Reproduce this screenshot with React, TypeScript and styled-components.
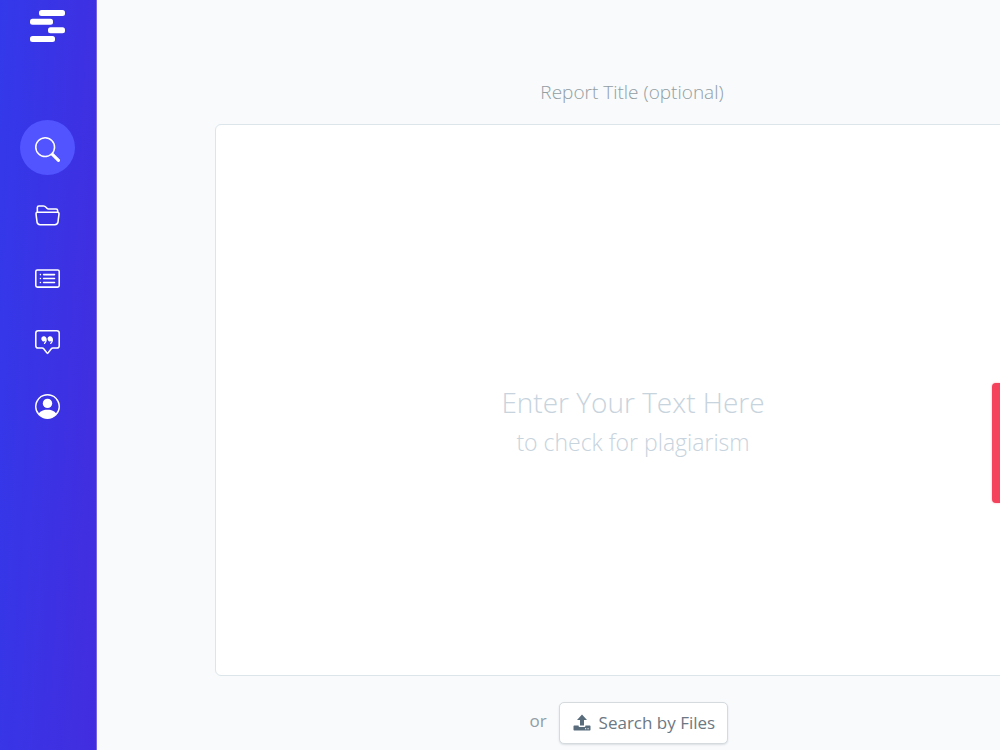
import React, { useState } from 'react';
import styled, { createGlobalStyle } from 'styled-components';
import { BsSearch, BsFolder2Open, BsCardList, BsChatSquareQuote, BsPersonCircle } from 'react-icons/bs';

const GlobalStyle = createGlobalStyle`
  * { box-sizing: border-box; }
  body {
    margin: 0;
    background: #f8fafc;
    font-family: "Open Sans", "Noto Sans", sans-serif;
    overflow-x: hidden;
  }
  button, input, textarea { font-family: inherit; }
`;

const Page = styled.div`
  display: flex;
  min-height: 100vh;
  overflow: hidden;
`;

const Sidebar = styled.nav`
  flex: 0 0 97px;
  display: flex;
  flex-direction: column;
  align-items: center;
  padding: 10px 2px 0 0;
  background: linear-gradient(93deg, #3339ea, #422ddf);
  border-right: 1px solid #7562e4;
`;

const LogoLink = styled.a`
  display: block;
  height: 32px;
  margin-bottom: 78px;
  svg { display: block; }
`;

const NavList = styled.ul`
  display: flex;
  flex-direction: column;
  gap: 9px;
  margin: 0;
  padding: 0 0 0 1px;
  list-style: none;
  li:first-child { margin-bottom: 1px; }
`;

const NavLink = styled.a<{ $active?: boolean }>`
  display: flex;
  align-items: center;
  justify-content: center;
  width: 55px;
  height: 55px;
  padding-top: 3px;
  border-radius: 50%;
  color: #fff;
  background: ${({ $active }) => ($active ? '#5154ff' : 'transparent')};
  svg { width: 25px; height: 25px; }
`;

const Main = styled.main`
  flex: 1 1 0;
  min-width: 0;
  padding: 74px 0 6px 118px;
`;

const Content = styled.div`
  min-width: 836px;
  display: flex;
  flex-direction: column;
`;

const TitleInput = styled.input`
  height: 36px;
  margin: 0 0 14px;
  padding: 0 2px 0 0;
  border: 0;
  outline: 0;
  background: transparent;
  text-align: center;
  font-size: 19px;
  font-weight: 300;
  color: #4c5a66;
  &::placeholder { color: #929ea3; opacity: 1; }
`;

const Editor = styled.div`
  position: relative;
  display: flex;
`;

const TextBox = styled.textarea`
  width: 100%;
  height: 552px;
  padding: 24px;
  border: 1px solid #dce5ea;
  border-radius: 6px;
  outline: 0;
  resize: none;
  background: #fff;
  color: #4c5a66;
  font-size: 18px;
`;

const Hint = styled.label`
  position: absolute;
  inset: 0;
  display: flex;
  flex-direction: column;
  align-items: center;
  justify-content: center;
  padding-top: 44px;
  pointer-events: none;
  color: #c7d3dd;
  font-weight: 300;
`;

const HintTitle = styled.span`
  font-size: 28px;
  line-height: 40px;
`;

const HintText = styled.span`
  font-size: 23px;
  line-height: 40px;
`;

const Actions = styled.div`
  display: flex;
  justify-content: center;
  align-items: center;
  gap: 12px;
  padding-right: 9px;
  margin-top: 26px;
`;

const Or = styled.span`
  font-size: 17px;
  line-height: 24px;
  padding-bottom: 4px;
  color: #929da5;
`;

const FileButton = styled.button`
  display: flex;
  align-items: center;
  gap: 8px;
  width: 169px;
  height: 42px;
  padding: 0 13px 2px;
  border: 1px solid #d5dadf;
  border-radius: 5px;
  background: #fff;
  box-shadow: 0 1px 2px rgba(60, 75, 90, 0.15);
  color: #6c7883;
  font-size: 17px;
  white-space: nowrap;
  svg { flex: none; color: #596c7c; }
`;

const SideTab = styled.button`
  position: fixed;
  right: 0;
  top: 383px;
  width: 8px;
  height: 120px;
  padding: 0;
  border: 0;
  border-radius: 4px 0 0 4px;
  background: #f5425c;
  box-shadow: 0 0 2px rgba(245, 66, 92, 0.5);
`;

const Logo = () => (
  <svg width="35" height="32" viewBox="0 0 35 32" fill="#fff" aria-hidden="true">
    <rect x="9" y="0" width="26" height="6" rx="2.5" />
    <rect x="0" y="8.7" width="23" height="6" rx="2.5" />
    <rect x="18" y="17.3" width="17" height="6" rx="2.5" />
    <rect x="0" y="26" width="25" height="6" rx="2.5" />
  </svg>
);

const UploadIcon = () => (
  <svg width="18" height="17" viewBox="0 0 18 17" fill="currentColor" aria-hidden="true">
    <path d="M9 0.5 14 6H11V11.5H7V6H4Z" />
    <path fillRule="evenodd" d="M1.2 11.5H5.6V12Q5.6 13 6.6 13H11.4Q12.4 13 12.4 12V11.5H16.8Q17.5 11.5 17.5 12.2V15.8Q17.5 16.5 16.8 16.5H1.2Q.5 16.5 .5 15.8V12.2Q.5 11.5 1.2 11.5ZM12 14.2V15.2H13.2V14.2ZM14.5 14.2V15.2H15.7V14.2Z" />
  </svg>
);

const navItems = [
  { name: 'Search', Icon: BsSearch },
  { name: 'Folders', Icon: BsFolder2Open },
  { name: 'Reports', Icon: BsCardList },
  { name: 'Citations', Icon: BsChatSquareQuote },
  { name: 'Account', Icon: BsPersonCircle },
];

export default function App() {
  const [text, setText] = useState('');
  return (
    <Page>
      <GlobalStyle />
      <Sidebar>
        <LogoLink href="#" aria-label="Home"><Logo /></LogoLink>
        <NavList>
          {navItems.map(({ name, Icon }, i) => (
            <li key={name}>
              <NavLink href="#" aria-label={name} $active={i === 0}><Icon /></NavLink>
            </li>
          ))}
        </NavList>
      </Sidebar>
      <Main>
        <Content>
          <TitleInput aria-label="Report Title" placeholder="Report Title (optional)" />
          <Editor>
            <TextBox id="source-text" value={text} onChange={(e) => setText(e.target.value)} />
            {!text && (
              <Hint htmlFor="source-text">
                <HintTitle>Enter Your Text Here</HintTitle>
                <HintText>to check for plagiarism</HintText>
              </Hint>
            )}
          </Editor>
          <Actions>
            <Or>or</Or>
            <FileButton type="button"><UploadIcon />Search by Files</FileButton>
          </Actions>
        </Content>
      </Main>
      <SideTab type="button" aria-label="Feedback" />
    </Page>
  );
}
